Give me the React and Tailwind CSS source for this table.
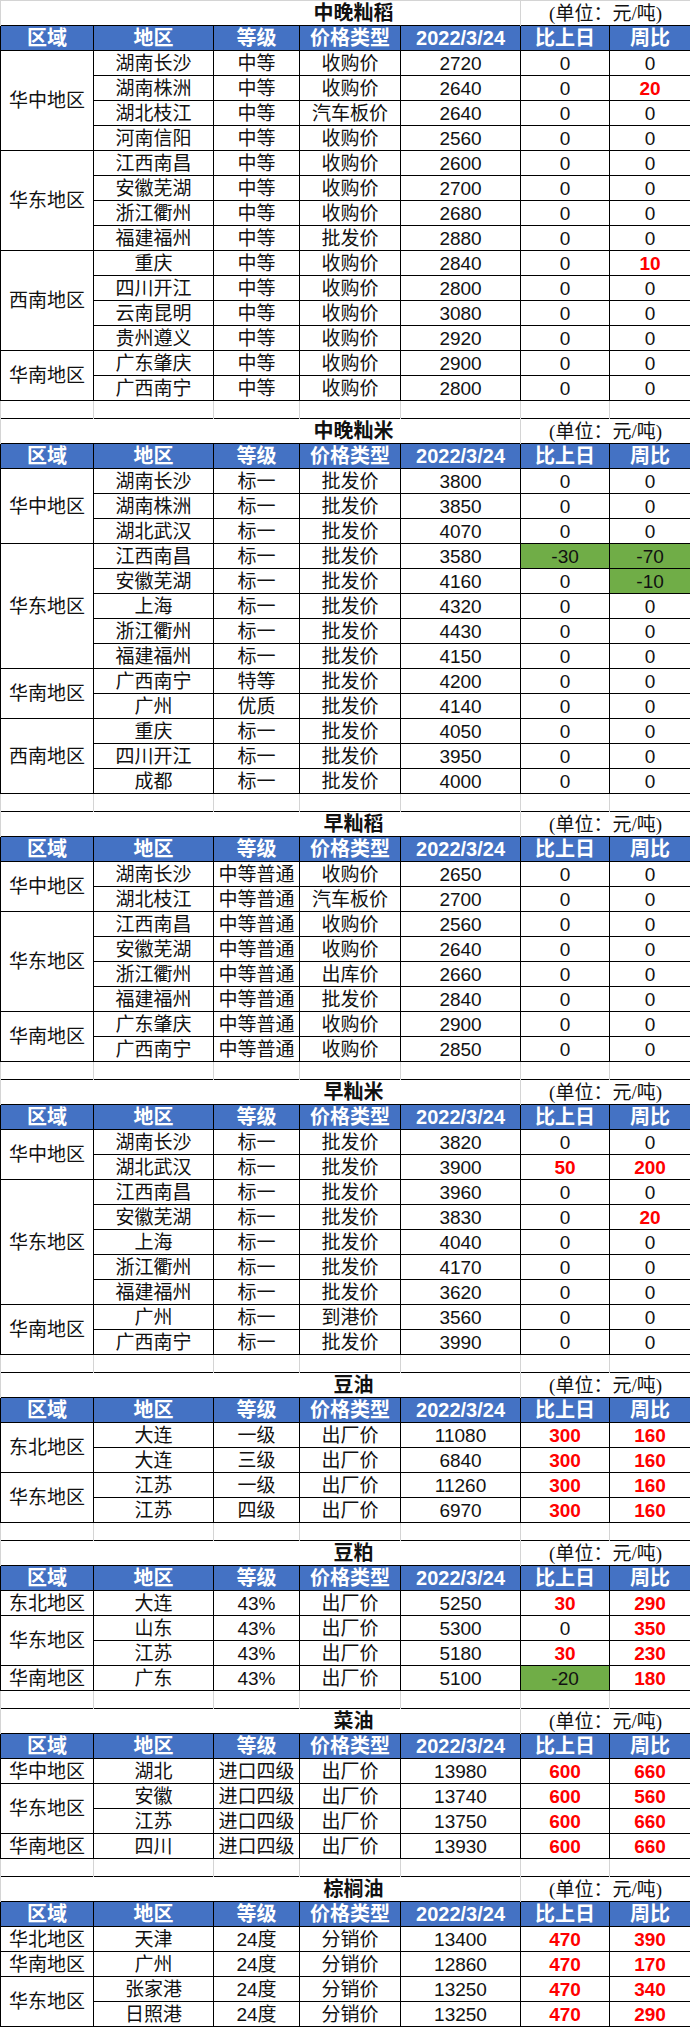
import React from 'react';

const cols = [93, 120, 86, 101, 120, 89, 81];
const heads = ['区域', '地区', '等级', '价格类型', '2022/3/24', '比上日', '周比'];

// 'r' = red bold rise, 'g' = green fall cell
const sections = [
  {
    title: '中晚籼稻',
    groups: [
      {
        region: '华中地区',
        rows: [
          ['湖南长沙', '中等', '收购价', '2720', '0', '0'],
          ['湖南株洲', '中等', '收购价', '2640', '0', 'r20'],
          ['湖北枝江', '中等', '汽车板价', '2640', '0', '0'],
          ['河南信阳', '中等', '收购价', '2560', '0', '0']
        ]
      },
      {
        region: '华东地区',
        rows: [
          ['江西南昌', '中等', '收购价', '2600', '0', '0'],
          ['安徽芜湖', '中等', '收购价', '2700', '0', '0'],
          ['浙江衢州', '中等', '收购价', '2680', '0', '0'],
          ['福建福州', '中等', '批发价', '2880', '0', '0']
        ]
      },
      {
        region: '西南地区',
        rows: [
          ['重庆', '中等', '收购价', '2840', '0', 'r10'],
          ['四川开江', '中等', '收购价', '2800', '0', '0'],
          ['云南昆明', '中等', '收购价', '3080', '0', '0'],
          ['贵州遵义', '中等', '收购价', '2920', '0', '0']
        ]
      },
      {
        region: '华南地区',
        rows: [
          ['广东肇庆', '中等', '收购价', '2900', '0', '0'],
          ['广西南宁', '中等', '收购价', '2800', '0', '0']
        ]
      }
    ]
  },
  {
    title: '中晚籼米',
    groups: [
      {
        region: '华中地区',
        rows: [
          ['湖南长沙', '标一', '批发价', '3800', '0', '0'],
          ['湖南株洲', '标一', '批发价', '3850', '0', '0'],
          ['湖北武汉', '标一', '批发价', '4070', '0', '0']
        ]
      },
      {
        region: '华东地区',
        rows: [
          ['江西南昌', '标一', '批发价', '3580', 'g-30', 'g-70'],
          ['安徽芜湖', '标一', '批发价', '4160', '0', 'g-10'],
          ['上海', '标一', '批发价', '4320', '0', '0'],
          ['浙江衢州', '标一', '批发价', '4430', '0', '0'],
          ['福建福州', '标一', '批发价', '4150', '0', '0']
        ]
      },
      {
        region: '华南地区',
        rows: [
          ['广西南宁', '特等', '批发价', '4200', '0', '0'],
          ['广州', '优质', '批发价', '4140', '0', '0']
        ]
      },
      {
        region: '西南地区',
        rows: [
          ['重庆', '标一', '批发价', '4050', '0', '0'],
          ['四川开江', '标一', '批发价', '3950', '0', '0'],
          ['成都', '标一', '批发价', '4000', '0', '0']
        ]
      }
    ]
  },
  {
    title: '早籼稻',
    groups: [
      {
        region: '华中地区',
        rows: [
          ['湖南长沙', '中等普通', '收购价', '2650', '0', '0'],
          ['湖北枝江', '中等普通', '汽车板价', '2700', '0', '0']
        ]
      },
      {
        region: '华东地区',
        rows: [
          ['江西南昌', '中等普通', '收购价', '2560', '0', '0'],
          ['安徽芜湖', '中等普通', '收购价', '2640', '0', '0'],
          ['浙江衢州', '中等普通', '出库价', '2660', '0', '0'],
          ['福建福州', '中等普通', '批发价', '2840', '0', '0']
        ]
      },
      {
        region: '华南地区',
        rows: [
          ['广东肇庆', '中等普通', '收购价', '2900', '0', '0'],
          ['广西南宁', '中等普通', '收购价', '2850', '0', '0']
        ]
      }
    ]
  },
  {
    title: '早籼米',
    groups: [
      {
        region: '华中地区',
        rows: [
          ['湖南长沙', '标一', '批发价', '3820', '0', '0'],
          ['湖北武汉', '标一', '批发价', '3900', 'r50', 'r200']
        ]
      },
      {
        region: '华东地区',
        rows: [
          ['江西南昌', '标一', '批发价', '3960', '0', '0'],
          ['安徽芜湖', '标一', '批发价', '3830', '0', 'r20'],
          ['上海', '标一', '批发价', '4040', '0', '0'],
          ['浙江衢州', '标一', '批发价', '4170', '0', '0'],
          ['福建福州', '标一', '批发价', '3620', '0', '0']
        ]
      },
      {
        region: '华南地区',
        rows: [
          ['广州', '标一', '到港价', '3560', '0', '0'],
          ['广西南宁', '标一', '批发价', '3990', '0', '0']
        ]
      }
    ]
  },
  {
    title: '豆油',
    groups: [
      {
        region: '东北地区',
        rows: [
          ['大连', '一级', '出厂价', '11080', 'r300', 'r160'],
          ['大连', '三级', '出厂价', '6840', 'r300', 'r160']
        ]
      },
      {
        region: '华东地区',
        rows: [
          ['江苏', '一级', '出厂价', '11260', 'r300', 'r160'],
          ['江苏', '四级', '出厂价', '6970', 'r300', 'r160']
        ]
      }
    ]
  },
  {
    title: '豆粕',
    groups: [
      { region: '东北地区', rows: [['大连', '43%', '出厂价', '5250', 'r30', 'r290']] },
      {
        region: '华东地区',
        rows: [
          ['山东', '43%', '出厂价', '5300', '0', 'r350'],
          ['江苏', '43%', '出厂价', '5180', 'r30', 'r230']
        ]
      },
      { region: '华南地区', rows: [['广东', '43%', '出厂价', '5100', 'g-20', 'r180']] }
    ]
  },
  {
    title: '菜油',
    groups: [
      { region: '华中地区', rows: [['湖北', '进口四级', '出厂价', '13980', 'r600', 'r660']] },
      {
        region: '华东地区',
        rows: [
          ['安徽', '进口四级', '出厂价', '13740', 'r600', 'r560'],
          ['江苏', '进口四级', '出厂价', '13750', 'r600', 'r660']
        ]
      },
      { region: '华南地区', rows: [['四川', '进口四级', '出厂价', '13930', 'r600', 'r660']] }
    ]
  },
  {
    title: '棕榈油',
    groups: [
      { region: '华北地区', rows: [['天津', '24度', '分销价', '13400', 'r470', 'r390']] },
      { region: '华南地区', rows: [['广州', '24度', '分销价', '12860', 'r470', 'r170']] },
      {
        region: '华东地区',
        rows: [
          ['张家港', '24度', '分销价', '13250', 'r470', 'r340'],
          ['日照港', '24度', '分销价', '13250', 'r470', 'r290']
        ]
      }
    ]
  }
];

const cell = 'border border-black p-0 text-center align-middle leading-none whitespace-nowrap';

const Change = ({ v }) => {
  if (v.startsWith('r')) {
    return <td className={`${cell} font-bold text-[#ff0000]`}>{v.slice(1)}</td>;
  }
  if (v.startsWith('g')) {
    return <td className={`${cell} bg-[#70ad47]`}>{v.slice(1)}</td>;
  }
  return <td className={cell}>{v}</td>;
};

const Section = ({ section, first, last }) => (
  <>
    {/* title row */}
    <tr className="h-[25px]">
      <td
        colSpan={5}
        className={`border-l border-l-[#d4d4d4] border-r border-r-[#d4d4d4] ${first ? 'border-t border-t-[#d4d4d4]' : 'border-t border-t-black'} p-0 pl-[186px] text-center align-middle leading-none text-[20px] font-bold`}
      >
        {section.title}
      </td>
      <td
        colSpan={2}
        className={`border-r border-r-[#d4d4d4] ${first ? 'border-t border-t-[#d4d4d4]' : 'border-t border-t-black'} p-0 text-center align-middle leading-none text-[19px] font-['Liberation_Serif','Noto_Sans_CJK_SC',serif]`}
      >
        (单位：元/吨)
      </td>
    </tr>

    {/* header row */}
    <tr className="h-[25px] bg-[#4472c4] text-white font-bold text-[20px]">
      {heads.map((h) => (
        <td key={h} className={cell}>
          {h}
        </td>
      ))}
    </tr>

    {section.groups.map((g) =>
      g.rows.map((r, i) => (
        <tr key={g.region + r[0] + r[1]} className="h-[25px] text-[19px]">
          {i === 0 && (
            <td rowSpan={g.rows.length} className={cell}>
              {g.region}
            </td>
          )}
          <td className={cell}>{r[0]}</td>
          <td className={cell}>{r[1]}</td>
          <td className={cell}>{r[2]}</td>
          <td className={cell}>{r[3]}</td>
          <Change v={r[4]} />
          <Change v={r[5]} />
        </tr>
      ))
    )}

    {/* spacer row between blocks */}
    {!last && (
      <tr className="h-[18px]">
        {cols.map((w, i) => (
          <td key={i} className="border-x border-x-[#d4d4d4] p-0"></td>
        ))}
      </tr>
    )}
  </>
);

export default function App() {
  return (
    <div className="w-[690px] bg-white text-[#111] font-['Liberation_Sans','Noto_Sans_CJK_SC',sans-serif]">
      <table className="w-[690px] table-fixed border-collapse">
        <colgroup>
          {cols.map((w, i) => (
            <col key={i} style={{ width: w }} />
          ))}
        </colgroup>
        <tbody>
          {sections.map((s, i) => (
            <Section key={s.title} section={s} first={i === 0} last={i === sections.length - 1} />
          ))}
        </tbody>
      </table>
    </div>
  );
}
